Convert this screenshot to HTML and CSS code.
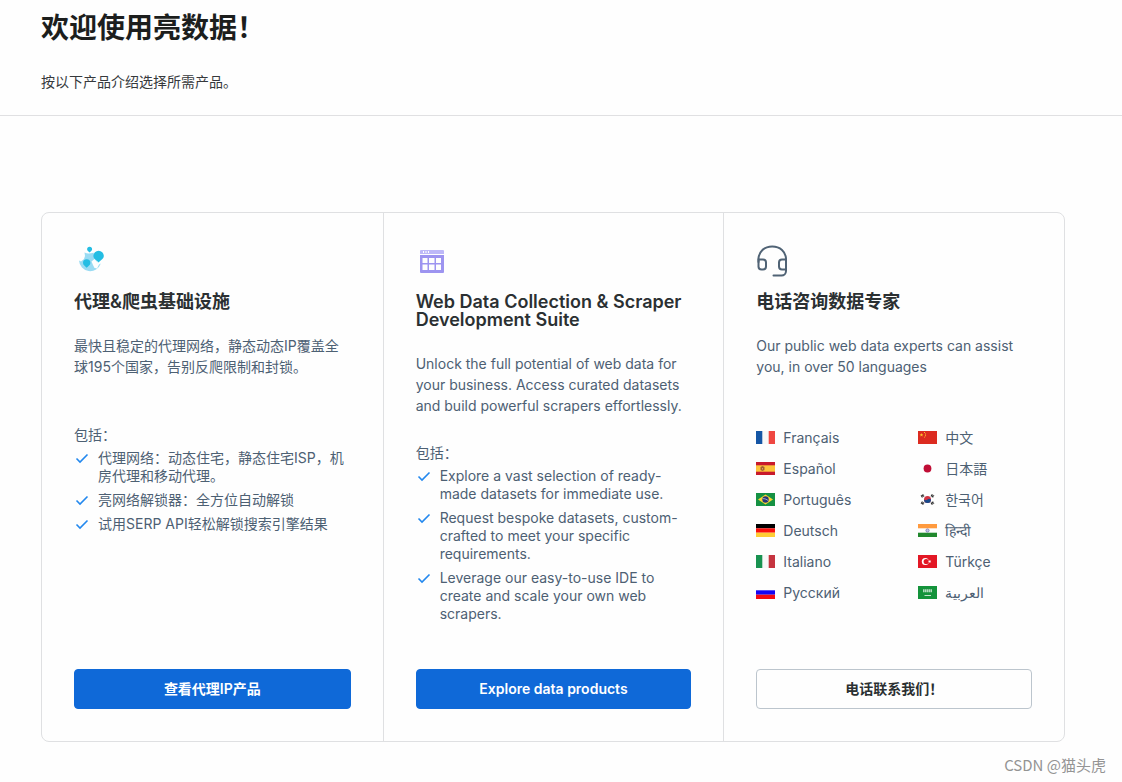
FILE: index.html
```html
<!DOCTYPE html>
<html lang="zh-CN">
<head>
<meta charset="utf-8">
<meta name="viewport" content="width=device-width, initial-scale=1">
<title>欢迎使用亮数据！</title>
<link rel="stylesheet" href="styles.css">
</head>
<body>
<svg class="defs" aria-hidden="true">
  <symbol id="check" viewBox="0 0 16 16"><path d="M2.500 8.500l3.500 3.500 7.500-7.500" fill="none" stroke="#2388ee" stroke-width="1.600"/></symbol>
</svg>
<header class="header">
  <h1 class="header-title">欢迎使用亮数据！</h1>
  <p class="header-text">按以下产品介绍选择所需产品。</p>
</header>
<main class="cards">
  <section class="card">
    <svg class="card-icon" viewBox="0 0 32 32" aria-hidden="true">
      <path d="M10.500 7.500c3 1.700 6 1 9 .3l4 10.200-3 1.500.5 3.500 2 .5 2-4 1.800-1A11.200 11.200 0 0 1 5 15.500l2 1 3-2.500 1-3z" fill="#99dbf3"/>
      <path d="M15.600 1.800a2.500 2.500 0 0 1 2.500 2.500c0 1.500-1.400 2.200-2.500 3.200-1.100-1-2.500-1.700-2.500-3.200a2.500 2.500 0 0 1 2.500-2.500z" fill="#23bde3"/>
      <path d="M24.600 5.800a5.200 5.200 0 0 1 5.200 5.200c0 3.300-3.500 4-5.200 6.500-1.700-2.500-5.200-3.200-5.200-6.500a5.200 5.200 0 0 1 5.200-5.200z" fill="#23bde3"/>
      <path d="M12.700 14.300a3.700 3.700 0 0 1 3.700 3.700c0 2.300-2.400 3.100-3.700 4.800-1.300-1.700-3.700-2.500-3.700-4.800a3.700 3.700 0 0 1 3.700-3.700z" fill="#23bde3"/>
      <path d="M17.500 16.500l3-2.500 3.500 4-2.500 1.500.5 3-1.500.5-1.500-3z" fill="#fefefe"/>
    </svg>
    <h2 class="card-title">代理&amp;爬虫基础设施</h2>
    <p class="card-text">最快且稳定的代理网络，静态动态IP覆盖全球195个国家，告别反爬限制和封锁。</p>
    <p class="list-title">包括：</p>
    <ul class="list">
      <li class="list-item"><svg class="check"><use href="#check"/></svg><span>代理网络：动态住宅，静态住宅ISP，机房代理和移动代理。</span></li>
      <li class="list-item"><svg class="check"><use href="#check"/></svg><span>亮网络解锁器：全方位自动解锁</span></li>
      <li class="list-item"><svg class="check"><use href="#check"/></svg><span>试用SERP API轻松解锁搜索引擎结果</span></li>
    </ul>
    <button class="button button-primary" type="button">查看代理IP产品</button>
  </section>
  <section class="card">
    <svg class="card-icon" viewBox="0 0 32 32" aria-hidden="true">
      <path d="M4 9V6a1 1 0 0 1 1-1h22a1 1 0 0 1 1 1v3z" fill="#bdb8f8"/>
      <path d="M7 6h1v2H7zM9.500 6h1v2h-1zM12 6h1v2h-1z" fill="#fff"/>
      <path d="M4 10h24v17a1 1 0 0 1-1 1H5a1 1 0 0 1-1-1z" fill="#9d94f0"/>
      <path d="M6.500 13h5v5h-5zM13 13h5.500v5H13zM20 13h5v5h-5zM6.500 19.500h5v5.500h-5zM13 19.500h5.500V25H13zM20 19.500h5V25h-5z" fill="#fefefe"/>
    </svg>
    <h2 class="card-title">Web Data Collection &amp; Scraper Development Suite</h2>
    <p class="card-text">Unlock the full potential of web data for your business. Access curated datasets and build powerful scrapers effortlessly.</p>
    <p class="list-title">包括：</p>
    <ul class="list">
      <li class="list-item"><svg class="check"><use href="#check"/></svg><span>Explore a vast selection of ready-made datasets for immediate use.</span></li>
      <li class="list-item"><svg class="check"><use href="#check"/></svg><span>Request bespoke datasets, custom-crafted to meet your specific requirements.</span></li>
      <li class="list-item"><svg class="check"><use href="#check"/></svg><span>Leverage our easy-to-use IDE to create and scale your own web scrapers.</span></li>
    </ul>
    <button class="button button-primary" type="button">Explore data products</button>
  </section>
  <section class="card">
    <svg class="card-icon" viewBox="0 0 32 32" fill="none" stroke="#506375" stroke-width="2" stroke-linecap="round" aria-hidden="true">
      <path d="M2.500 17v-2.500C2.500 6.500 8.500 1.500 16.200 1.500S30 6.500 30 14.500V26a4.500 4.500 0 0 1-4.500 4.500H17.500"/>
      <path d="M2.500 14.500H7a3 3 0 0 1 3 3v4a3 3 0 0 1-3 3H5.500a3 3 0 0 1-3-3zM30 14.500h-4a3 3 0 0 0-3 3v4a3 3 0 0 0 3 3h4z"/>
    </svg>
    <h2 class="card-title">电话咨询数据专家</h2>
    <p class="card-text">Our public web data experts can assist you, in over 50 languages</p>
    <ul class="languages">
      <li class="language"><svg class="flag" viewBox="0 0 19 13"><path fill="#f8f8f8" d="M0 0h19v13H0z"/><path fill="#1556a5" d="M0 0h6.300v13H0z"/><path fill="#ef4741" d="M12.700 0H19v13h-6.300z"/></svg><span lang="fr">Français</span></li>
      <li class="language"><svg class="flag" viewBox="0 0 19 13"><path fill="#c81a2c" d="M0 0h19v13H0z"/><path fill="#fdc43b" d="M0 3.300h19v6.400H0z"/><path fill="#a5622e" d="M4.500 5l2-1 2 1v3l-2 1-2-1z"/><path fill="#d8a36b" d="M6 6h1v1.500H6z"/></svg><span lang="es">Español</span></li>
      <li class="language"><svg class="flag" viewBox="0 0 19 13"><path fill="#159143" d="M0 0h19v13H0z"/><path fill="#fcd430" d="M9.500 1.500l7.500 5-7.500 5-7.500-5z"/><circle cx="9.500" cy="6.500" r="3.200" fill="#273576"/><path d="M6.700 5.700c2-.2 4 .5 5.500 2" fill="none" stroke="#d4dfe5" stroke-width=".7"/></svg><span lang="pt">Português</span></li>
      <li class="language"><svg class="flag" viewBox="0 0 19 13"><path d="M0 0h19v4.300H0z"/><path fill="#f8100d" d="M0 4.300h19v4.400H0z"/><path fill="#ffcd34" d="M0 8.700h19V13H0z"/></svg><span lang="de">Deutsch</span></li>
      <li class="language"><svg class="flag" viewBox="0 0 19 13"><path fill="#f8f8f8" d="M0 0h19v13H0z"/><path fill="#189250" d="M0 0h6.300v13H0z"/><path fill="#c5343f" d="M12.700 0H19v13h-6.300z"/></svg><span lang="it">Italiano</span></li>
      <li class="language"><svg class="flag" viewBox="0 0 19 13"><path fill="#fefefe" d="M0 0h19v4.300H0z"/><path fill="#1505f4" d="M0 4.300h19v4.400H0z"/><path fill="#f60b11" d="M0 8.700h19V13H0z"/></svg><span lang="ru">Русский</span></li>
      <li class="language"><svg class="flag" viewBox="0 0 19 13"><path fill="#dc2b20" d="M0 0h19v13H0z"/><path fill="#fcc42c" d="M3.500 2l.5 1.300h1.400l-1.100.8.4 1.400-1.200-.8-1.200.8.400-1.400-1.100-.8H3zM6 1h1v1H6zM7 2.600h1v1H7zM7 4.300h1v1H7zM6 5.700h1v.8H6z"/></svg><span lang="zh">中文</span></li>
      <li class="language"><svg class="flag" viewBox="0 0 19 13"><path fill="#fefefe" d="M0 0h19v13H0z"/><circle cx="9.500" cy="6.500" r="3.900" fill="#c00d35"/></svg><span lang="ja">日本語</span></li>
      <li class="language"><svg class="flag" viewBox="0 0 19 13"><path fill="#fefefe" d="M0 0h19v13H0z"/><circle cx="9.500" cy="6.500" r="3.500" fill="#d13343"/><path fill="#164a8c" d="M6 6.500c1.300 1.300 2.700.7 3.500 0s2.300-1.200 3.500 0a3.500 3.500 0 0 1-7 0z"/><path stroke="#222" stroke-width="2.600" stroke-dasharray="1 .3" d="M3.300 3.700l2.500-1.600M13.200 10.900l2.500-1.600M3.300 9.300l2.500 1.600M13.200 2.100l2.500 1.600"/></svg><span lang="ko">한국어</span></li>
      <li class="language"><svg class="flag" viewBox="0 0 19 13"><path fill="#fefefe" d="M0 0h19v13H0z"/><path fill="#ff9a3e" d="M0 0h19v4.300H0z"/><path fill="#21882d" d="M0 8.700h19V13H0z"/><circle cx="9.500" cy="6.500" r="1.600" fill="#c9c9e8" stroke="#6767ad" stroke-width=".7"/></svg><span lang="hi">हिन्दी</span></li>
      <li class="language"><svg class="flag" viewBox="0 0 19 13"><path fill="#e31725" d="M0 0h19v13H0z"/><circle cx="7.300" cy="6.500" r="3.500" fill="#fff"/><circle cx="8.200" cy="6.500" r="2.600" fill="#e31725"/><path fill="#fff" d="M10 6.500l1.200-.4.1-1.200.7.900 1.200-.4-.7 1.100.7 1-1.200-.3-.7.900-.1-1.200z"/></svg><span lang="tr">Türkçe</span></li>
      <li class="language"><svg class="flag" viewBox="0 0 19 13"><path fill="#14933b" d="M0 0h19v13H0z"/><path d="M5 4h9M5 5.500h9" stroke="#b4dbc0" stroke-width="1.400" stroke-dasharray="1.600 .4"/><path d="M6.500 9.500h6.500" stroke="#c4e3cd"/></svg><span lang="ar">العربية</span></li>
    </ul>
    <button class="button button-outline" type="button">电话联系我们！</button>
  </section>
</main>
<footer class="footer">CSDN @猫头虎</footer>
</body>
</html>
```
FILE: styles.css
```css
* {
  box-sizing: border-box;
}

body,
h1,
h2,
p,
ul {
  margin: 0;
  padding: 0;
}

body {
  background: #fefefe;
  color: #4d6073;
  font-family: Inter, "Noto Sans CJK SC", sans-serif;
  font-size: 14px;
  line-height: 21px;
}

ul {
  list-style: none;
}

.defs {
  display: none;
}

.header {
  padding: 8px 41px 23px;
  border-bottom: 1px solid #e0e0e2;
}

.header-title {
  margin-bottom: 22px;
  color: #1c1e1d;
  font-size: 28px;
  font-weight: 700;
  line-height: 41px;
}

.header-text {
  color: #36393c;
}

.cards {
  display: grid;
  grid-template-columns: repeat(3, minmax(0, 1fr));
  margin: 96px 57px 0 41px;
  border: 1px solid #dfe0e2;
  border-radius: 8px;
}

.card {
  display: flex;
  flex-direction: column;
  padding: 32px;
}

.card + .card {
  border-left: 1px solid #dfe0e2;
}

.card-icon {
  width: 32px;
  height: 32px;
  margin-bottom: 16px;
}

.card-title {
  margin-bottom: 24px;
  color: #2b3032;
  font-size: 18px;
  font-weight: 600;
  line-height: 18px;
}

.card-text {
  min-height: 63px;
  margin-bottom: 28px;
}

.list-title {
  margin-bottom: 5px;
  line-height: 18px;
}

.list {
  display: flex;
  flex-direction: column;
  gap: 6px;
  margin-bottom: 46px;
  line-height: 18px;
}

.list-item {
  display: flex;
  gap: 8px;
}

.check {
  flex: none;
  width: 16px;
  height: 18px;
}

.languages {
  display: grid;
  grid-template-rows: repeat(6, 23px);
  grid-auto-flow: column;
  grid-auto-columns: 1fr;
  gap: 8px 48px;
  margin-bottom: 46px;
}

.language {
  display: flex;
  align-items: center;
  gap: 8px;
  white-space: nowrap;
}

.flag {
  flex: none;
  width: 19px;
  height: 13px;
}

.button {
  height: 40px;
  margin-top: auto;
  padding: 0 8px 2px;
  border: 1px solid #0f69d8;
  border-radius: 4px;
  font: inherit;
  font-weight: 600;
}

.button-primary {
  background: #0f69d8;
  color: #fff;
}

.button-outline {
  border-color: #bcc5cd;
  background: #fefefe;
  color: #2b3032;
}

.footer {
  padding: 13px 16px 7px;
  color: #949494;
  font-family: "Noto Sans CJK SC", sans-serif;
  font-size: 15px;
  line-height: 20px;
  text-align: right;
}
```
